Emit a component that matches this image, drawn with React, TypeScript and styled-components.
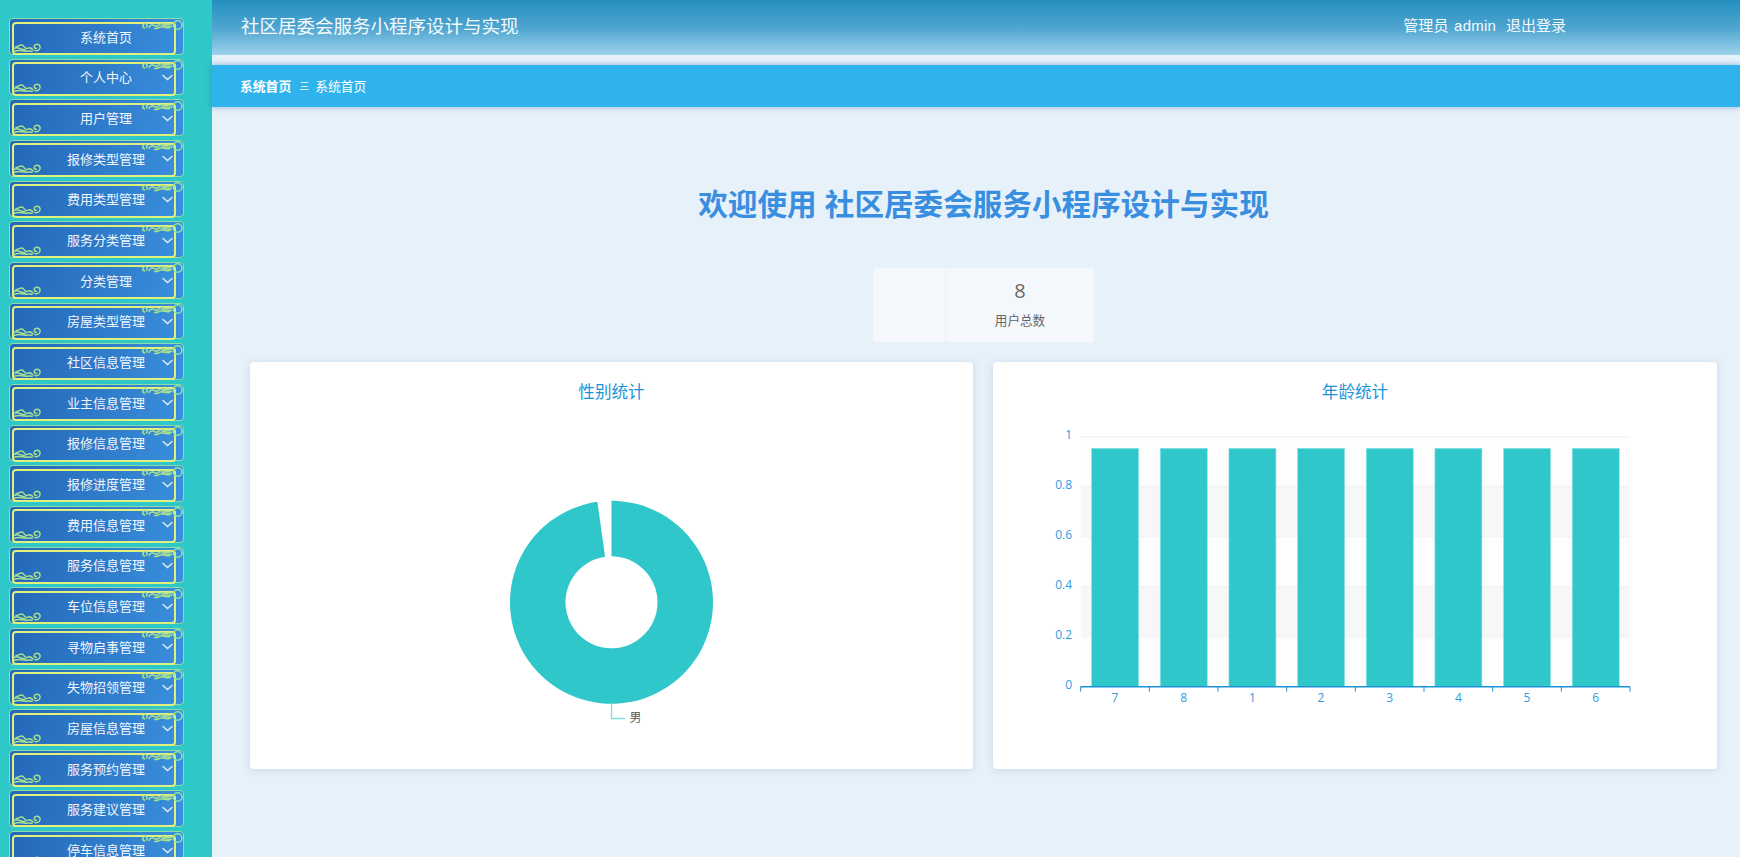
import React from "react";
import styled, { createGlobalStyle } from "styled-components";

const FONT = `"Liberation Sans", "Noto Sans CJK SC", sans-serif`;

const menuItems = [
  "系统首页",
  "个人中心",
  "用户管理",
  "报修类型管理",
  "费用类型管理",
  "服务分类管理",
  "分类管理",
  "房屋类型管理",
  "社区信息管理",
  "业主信息管理",
  "报修信息管理",
  "报修进度管理",
  "费用信息管理",
  "服务信息管理",
  "车位信息管理",
  "寻物启事管理",
  "失物招领管理",
  "房屋信息管理",
  "服务预约管理",
  "服务建议管理",
  "停车信息管理",
];

const ageLabels = ["7", "8", "1", "2", "3", "4", "5", "6"];
const yTicks = ["1", "0.8", "0.6", "0.4", "0.2", "0"];

const GlobalStyle = createGlobalStyle`
  html, body {
    margin: 0;
    height: 100%;
    overflow: hidden;
    background: #e6f1fa;
    font-family: ${FONT};
  }
  * {
    box-sizing: border-box;
  }
`;

const Page = styled.div`
  display: flex;
  width: 1740px;
  height: 857px;
  overflow: hidden;
`;

const Sidebar = styled.nav`
  flex: 0 0 212px;
  height: 857px;
  padding: 18px 0 0 9px;
  background: #2ec8c8;
  overflow: hidden;
`;

const MenuButton = styled.div`
  position: relative;
  display: flex;
  align-items: center;
  justify-content: center;
  width: 175px;
  height: 36.67px;
  margin-bottom: 4px;
  padding: 0 0 0 19px;
  border: 1.5px solid #8fdca8;
  border-radius: 4px;
  background: linear-gradient(100deg, #2468b8 0%, #2f7ccb 55%, #3a90de 100%);
  color: #f2f6fc;
  font-size: 13px;
  white-space: nowrap;

  &::before {
    content: "";
    position: absolute;
    left: 1.5px;
    top: 2.5px;
    width: 160px;
    height: 29.5px;
    border: 2px solid #e2f07c;
    border-radius: 4px;
  }
`;

const Ornament = styled.svg`
  position: absolute;
  left: -1.5px;
  top: -1.5px;
  width: 175px;
  height: 37px;
  overflow: visible;
  filter: blur(0.3px);
  pointer-events: none;
`;

const Main = styled.div`
  flex: 1;
  min-width: 0;
  display: flex;
  flex-direction: column;
`;

const Header = styled.header`
  display: flex;
  align-items: center;
  justify-content: space-between;
  height: 55px;
  padding: 0 174px 6px 29px;
  background: linear-gradient(180deg, #2490c0 0%, #4ea4cf 50%, #9dd3ec 100%);
  color: #f4fafd;
`;

const AppTitle = styled.div`
  font-size: 18.5px;
`;

const UserBox = styled.div`
  display: flex;
  gap: 10px;
  font-size: 15px;
`;

const UserName = styled.span`
  letter-spacing: 0.2px;
  word-spacing: 1px;
`;

const Breadcrumb = styled.div`
  display: flex;
  align-items: center;
  height: 42px;
  margin-top: 10px;
  padding: 0 0 2px 28px;
  background: #2fb3ec;
  box-shadow: 0 0 6px rgba(40, 90, 150, 0.45);
  color: #fff;
  font-size: 12.8px;
`;

const CrumbStrong = styled.span`
  font-weight: 700;
`;

const CrumbSeparator = styled.span`
  margin: 0 6px 0 8px;
  font-size: 10px;
`;

const Content = styled.div`
  display: flex;
  flex-direction: column;
  align-items: center;
  padding: 77px 23px 0 38px;
`;

const WelcomeTitle = styled.h1`
  margin: 0;
  height: 42px;
  color: #3a8ee0;
  font-size: 29.6px;
  font-weight: 700;
  line-height: 42px;
  white-space: nowrap;
`;

const StatCard = styled.div`
  display: flex;
  width: 221px;
  height: 74px;
  margin-top: 42px;
  border-radius: 4px;
  background: #f4f8fc;
`;

const StatIconSlot = styled.div`
  flex: 0 0 73px;
  border-right: 1px solid #ecf1f6;
`;

const StatBody = styled.div`
  flex: 1;
  display: flex;
  flex-direction: column;
  align-items: center;
  color: #666;
`;

const StatValue = styled.div`
  margin-top: 9px;
  font-family: "Open Sans", ${FONT};
  font-size: 20px;
  line-height: 27px;
`;

const StatLabel = styled.div`
  margin-top: 8px;
  font-size: 12.6px;
  line-height: 18px;
`;

const ChartRow = styled.div`
  display: grid;
  grid-template-columns: 723px 724px;
  gap: 20px;
  width: 100%;
  margin-top: 20px;
`;

const ChartCard = styled.section`
  height: 407px;
  border-radius: 4px;
  background: #fff;
  box-shadow: 0 1px 8px rgba(60, 100, 150, 0.18);
`;

const ChartTitle = styled.div`
  height: 42px;
  padding-top: 21px;
  color: #1a94d5;
  font-size: 16.6px;
  line-height: 20px;
  text-align: center;
`;

const ChartSvg = styled.svg`
  display: block;
  width: 100%;
  height: 365px;
`;

const AxisText = styled.text`
  fill: #2f9be0;
  font-family: "Open Sans", ${FONT};
  font-size: 12px;
`;

const LegendText = styled.text`
  fill: #555;
  font-family: ${FONT};
  font-size: 12px;
`;

function MenuOrnament({ chevron }: { chevron: boolean }) {
  return (
    <Ornament viewBox="0 0 175 37" fill="none">
      <circle cx="168.7" cy="7" r="4.300" stroke="#8ae6a2" strokeWidth="1.600" />
      <g stroke="#a9e08f" strokeWidth="1.500" strokeLinecap="round">
        <path d="M135.500 10c-2.400-.6-2-4.400.6-4.400 2.200 0 3 2.600 1.200 3.400" />
        <path d="M140 9.500c1.500-3.800 4.500-2.600 6.500-1.500 2.500 1.200 3.500-2.800 6.500-2.300 3 .5 6 .8 9 .2" />
        <path d="M145.500 10.500c3 .6 5-2 8-1.600 2.500.3 4.500 1.500 7.500.3" />
        <path d="M153 7.500c3 .3 6 .7 9.500.8" />
      </g>
      <g stroke="#a9e08f" strokeWidth="1.500" strokeLinecap="round">
        <path d="M26 32.500c3 .8 5.800-1.400 5-4.200-.7-2.500-4.500-2.800-5.600-.6-.7 1.500.5 2.900 1.900 2.600" />
        <path d="M24 32c-2-3.600-4.600-1.800-6.500-1.600-2 .2-2.600-3.600-5-3.300-2.400.3-4 1.600-5.500 1.300" />
        <path d="M23 33.300c-2.500-.6-5 .2-7.500-.3-2.500-.5-6-1.200-10.500.2" />
        <path d="M5 30.500c2-1 4-.8 6 .2 1.500.8 3.500.6 5 1" />
      </g>
      {chevron && (
        <path
          d="M154 17.500l4.500 4 4.500-4"
          stroke="#dce9f2"
          strokeWidth="1.500"
          strokeLinecap="round"
        />
      )}
    </Ornament>
  );
}

// ring slice running clockwise from 12 o'clock
function ringSlice(
  cx: number,
  cy: number,
  r0: number,
  r1: number,
  degrees: number,
) {
  const a = (degrees * Math.PI) / 180;
  const sx = Math.sin(a);
  const cs = Math.cos(a);
  return [
    `M${cx} ${cy - r1}`,
    `A${r1} ${r1} 0 1 1 ${cx + r1 * sx} ${cy - r1 * cs}`,
    `L${cx + r0 * sx} ${cy - r0 * cs}`,
    `A${r0} ${r0} 0 1 0 ${cx} ${cy - r0}`,
    "Z",
  ].join(" ");
}

function GenderChart() {
  return (
    <ChartSvg viewBox="0 0 723 365">
      <path d={ringSlice(361.5, 198.3, 46, 101.5, 352)} fill="#2fc7c9" />
      <path
        d="M361.500 300v14.500h13.500"
        fill="none"
        stroke="#7fdde0"
        strokeWidth="1.300"
      />
      <LegendText x="379.500" y="317.500">
        男
      </LegendText>
    </ChartSvg>
  );
}

function AgeChart() {
  const left = 87.7;
  const top = 32.7;
  const bandH = 50;
  const catW = 549.3 / ageLabels.length;
  const bottom = top + bandH * 5;

  return (
    <ChartSvg viewBox="0 0 724 365">
      {[0, 1, 2, 3, 4].map((i) => (
        <rect
          key={i}
          x={left}
          y={top + i * bandH}
          width={549.3}
          height={bandH}
          fill={i % 2 ? "#f7f7f7" : "#fdfdfd"}
        />
      ))}
      {yTicks.map((tick, i) => (
        <React.Fragment key={tick}>
          {i < 5 && (
            <line
              x1={left}
              x2={left + 549.3}
              y1={top + i * bandH}
              y2={top + i * bandH}
              stroke="#f0f0f0"
            />
          )}
          <AxisText x={79} y={top + i * bandH + 2.5} textAnchor="end">
            {tick}
          </AxisText>
        </React.Fragment>
      ))}
      {ageLabels.map((label, i) => (
        <React.Fragment key={label}>
          <rect
            x={left + i * catW + 10.9}
            y={44.3}
            width={47}
            height={bottom - 44.3}
            fill="#2fc7c9"
            stroke="#8fe3e4"
            strokeWidth="0.6"
          />
          <AxisText
            x={left + i * catW + catW / 2}
            y={bottom + 15}
            textAnchor="middle"
          >
            {label}
          </AxisText>
        </React.Fragment>
      ))}
      <line
        x1={left}
        x2={left + 549.3}
        y1={bottom}
        y2={bottom}
        stroke="#1a94d5"
        strokeWidth="1.500"
      />
      {Array.from({ length: ageLabels.length + 1 }, (_, i) => (
        <line
          key={i}
          x1={left + i * catW}
          x2={left + i * catW}
          y1={bottom}
          y2={bottom + 5}
          stroke="#1a94d5"
        />
      ))}
    </ChartSvg>
  );
}

export default function App() {
  return (
    <Page>
      <GlobalStyle />
      <Sidebar>
        {menuItems.map((item, i) => (
          <MenuButton key={item}>
            <MenuOrnament chevron={i > 0} />
            {item}
          </MenuButton>
        ))}
      </Sidebar>
      <Main>
        <Header>
          <AppTitle>社区居委会服务小程序设计与实现</AppTitle>
          <UserBox>
            <UserName>管理员 admin</UserName>
            <span>退出登录</span>
          </UserBox>
        </Header>
        <Breadcrumb>
          <CrumbStrong>系统首页</CrumbStrong>
          <CrumbSeparator>三</CrumbSeparator>
          <span>系统首页</span>
        </Breadcrumb>
        <Content>
          <WelcomeTitle>欢迎使用 社区居委会服务小程序设计与实现</WelcomeTitle>
          <StatCard>
            <StatIconSlot />
            <StatBody>
              <StatValue>8</StatValue>
              <StatLabel>用户总数</StatLabel>
            </StatBody>
          </StatCard>
          <ChartRow>
            <ChartCard>
              <ChartTitle>性别统计</ChartTitle>
              <GenderChart />
            </ChartCard>
            <ChartCard>
              <ChartTitle>年龄统计</ChartTitle>
              <AgeChart />
            </ChartCard>
          </ChartRow>
        </Content>
      </Main>
    </Page>
  );
}
